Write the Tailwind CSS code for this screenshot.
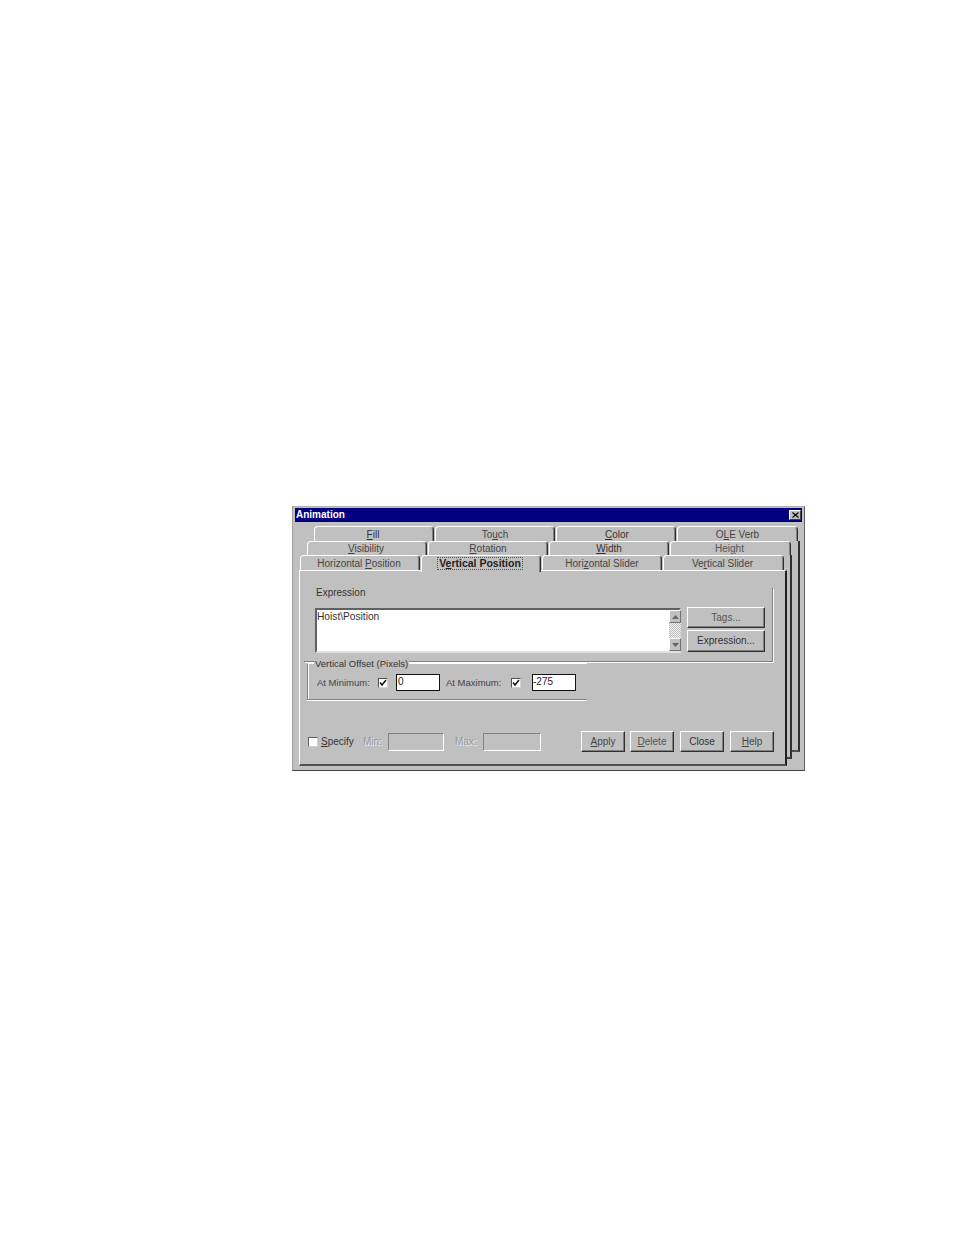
<!DOCTYPE html>
<html lang="en">
<head>
    <meta charset="UTF-8">
    <title>Animation</title>
    <script src="https://cdn.jsdelivr.net/npm/@tailwindcss/browser@4"></script>
</head>
<body class="bg-white min-h-screen font-['Liberation_Sans',Arial,sans-serif] text-[10px] leading-none text-[#2a2a2a]">
    <div class="pt-[506px] pl-[292px]">
        <!-- Dialog window -->
        <div class="relative w-[513px] h-[265px] bg-[#c0c0c0] border border-t-[#b0b0b0] border-l-[#a0a0a0] border-r-[#606060] border-b-[#404040] overflow-hidden">
            <!-- Pages behind the front one -->
            <div class="absolute left-[21px] top-[34px] w-[486px] h-[211px] border-r-2 border-b-2 border-r-[#303030] border-b-[#505050]"></div>
            <div class="absolute left-[13px] top-[48px] w-[486px] h-[204px] bg-[#c0c0c0] border-r-2 border-b-2 border-r-[#303030] border-b-[#404040]"></div>

            <!-- Title bar -->
            <div class="relative mx-[2px] mt-[1px] h-[14px] bg-[#000080] flex items-center justify-between pl-[1px] pr-[1px]">
                <span class="text-white text-[10px] font-bold">Animation</span>
                <span class="w-[12px] h-[10px] bg-[#c0c0c0] border border-t-white border-l-white border-r-[#404040] border-b-[#404040] flex items-center justify-center">
                    <svg width="7" height="6" viewBox="0 0 7 6"><path d="M0.5 0.5L6.5 5.5M6.5 0.5L0.5 5.5" stroke="#000" stroke-width="1.2"/></svg>
                </span>
            </div>

            <!-- Tab rows -->
            <div class="relative mt-[4px]">
                <div class="flex h-[15px] ml-[21px] gap-[1px]">
                    <div class="w-[120px] pt-[1px] pr-[2px] flex items-center justify-center border-t border-l border-t-white border-l-white border-r border-r-[#303030] shadow-[inset_-1px_0_0_#808080] rounded-t-[4px] text-[#333]"><span><u>F</u>ill</span></div>
                    <div class="w-[120px] pt-[1px] flex items-center justify-center border-t border-l border-t-white border-l-white border-r border-r-[#303030] shadow-[inset_-1px_0_0_#808080] rounded-t-[4px] text-[#444]"><span>To<u>u</u>ch</span></div>
                    <div class="w-[120px] pt-[1px] pl-[2px] flex items-center justify-center border-t border-l border-t-white border-l-white border-r border-r-[#303030] shadow-[inset_-1px_0_0_#808080] rounded-t-[4px] text-[#333]"><span><u>C</u>olor</span></div>
                    <div class="w-[121px] pt-[1px] flex items-center justify-center border-t border-l border-t-white border-l-white border-r border-r-[#303030] shadow-[inset_-1px_0_0_#808080] rounded-t-[4px] text-[#444]"><span>O<u>L</u>E Verb</span></div>
                </div>
                <div class="flex h-[14px] ml-[14px] gap-[1px]">
                    <div class="w-[120px] pt-[1px] pr-[2px] flex items-center justify-center border-t border-l border-t-white border-l-white border-r border-r-[#303030] shadow-[inset_-1px_0_0_#808080] rounded-t-[4px] text-[#444]"><span><u>V</u>isibility</span></div>
                    <div class="w-[120px] pt-[1px] flex items-center justify-center border-t border-l border-t-white border-l-white border-r border-r-[#303030] shadow-[inset_-1px_0_0_#808080] rounded-t-[4px] text-[#444]"><span><u>R</u>otation</span></div>
                    <div class="w-[120px] pt-[1px] flex items-center justify-center border-t border-l border-t-white border-l-white border-r border-r-[#303030] shadow-[inset_-1px_0_0_#808080] rounded-t-[4px] text-[#333]"><span><u>W</u>idth</span></div>
                    <div class="w-[121px] pt-[1px] pr-[2px] flex items-center justify-center border-t border-l border-t-white border-l-white border-r border-r-[#303030] shadow-[inset_-1px_0_0_#808080] rounded-t-[4px] text-[#555]"><span>Hei<u>g</u>ht</span></div>
                </div>
                <div class="relative flex h-[15px] ml-[7px] gap-[1px]">
                    <div class="w-[120px] pt-[1px] pr-[2px] flex items-center justify-center border-t border-l border-t-white border-l-white border-r border-r-[#303030] shadow-[inset_-1px_0_0_#808080] rounded-t-[4px] text-[#444]"><span>Horizontal <u>P</u>osition</span></div>
                    <div class="relative z-10 w-[120px] h-[17px] bg-[#c0c0c0] flex items-start pt-[1px] pr-[2px] justify-center border-t border-l border-t-white border-l-white border-r border-r-[#303030] shadow-[inset_-1px_0_0_#808080] rounded-t-[4px]"><span class="font-bold text-[10.5px] text-[#222] border border-dotted border-[#555] px-[1px]">V<u>e</u>rtical Position</span></div>
                    <div class="w-[120px] pt-[1px] flex items-center justify-center border-t border-l border-t-white border-l-white border-r border-r-[#303030] shadow-[inset_-1px_0_0_#808080] rounded-t-[4px] text-[#444]"><span>Hori<u>z</u>ontal Slider</span></div>
                    <div class="w-[121px] pt-[1px] pr-[2px] flex items-center justify-center border-t border-l border-t-white border-l-white border-r border-r-[#303030] shadow-[inset_-1px_0_0_#808080] rounded-t-[4px] text-[#444]"><span>Ve<u>r</u>tical Slider</span></div>
                </div>
            </div>

            <!-- Front page -->
            <div class="relative ml-[6px] w-[488px] h-[196px] bg-[#c0c0c0] border-t border-l border-t-white border-l-white border-r-2 border-b-2 border-r-[#202020] border-b-[#505050] pt-[21px]">
                <!-- Expression group -->
                <div class="ml-[4px] w-[469px] h-[74px] border-r border-b border-r-[#808080] border-b-[#808080] shadow-[1px_1px_0_#fff] pl-[11px]">
                    <div class="h-[16px] -mt-[4px] pl-[1px] text-[#333]">Expression</div>
                    <div class="flex mt-[4px]">
                        <div class="w-[366px] h-[45px] bg-white border-2 border-t-[#606060] border-l-[#606060] border-r-[#e0e0e0] border-b-[#e0e0e0] flex justify-between">
                            <span class="pt-[2px] text-[10.2px] text-[#333]">Hoist\Position</span>
                            <div class="w-[12px] -mr-[2px] flex flex-col bg-[repeating-conic-gradient(#c0c0c0_0_25%,#f0f0f0_0_50%)] bg-[length:2px_2px]">
                                <div class="h-[13px] bg-[#c0c0c0] border border-t-white border-l-white border-r-[#707070] border-b-[#707070] flex items-center justify-center">
                                    <svg width="7" height="4" viewBox="0 0 7 4"><path d="M3.5 0L7 4H0Z" fill="#666"/></svg>
                                </div>
                                <div class="flex-1"></div>
                                <div class="h-[13px] bg-[#c0c0c0] border border-t-white border-l-white border-r-[#707070] border-b-[#707070] flex items-center justify-center">
                                    <svg width="7" height="4" viewBox="0 0 7 4"><path d="M3.5 4L7 0H0Z" fill="#666"/></svg>
                                </div>
                            </div>
                        </div>
                        <div class="ml-[6px] -mt-[1px] flex flex-col gap-[2px]">
                            <div class="w-[78px] h-[21px] flex items-center justify-center border border-t-white border-l-white border-r-[#303030] border-b-[#303030] shadow-[inset_-1px_-1px_0_#808080] text-[#555]">Tags...</div>
                            <div class="w-[78px] h-[22px] flex items-center justify-center border border-t-white border-l-white border-r-[#303030] border-b-[#303030] shadow-[inset_-1px_-1px_0_#808080] text-[#333]">Expression...</div>
                        </div>
                    </div>
                </div>

                <!-- Vertical Offset group -->
                <div class="relative ml-[7px] mt-[1px] w-[280px] h-[37px] text-[9.5px] border-t border-l border-b border-t-white border-l-[#808080] border-b-[#808080] shadow-[inset_1px_0_0_#fff,0_1px_0_#fff] flex items-center pt-[2px] pl-[9px]">
                    <span class="absolute left-[6px] -top-[5px] bg-[#c0c0c0] px-[1px] text-[#333]">Vertical Offset (Pixels)</span>
                    <span class="w-[61px] text-[#444]">At Minimum:</span>
                    <span class="w-[10px] h-[10px] bg-white border border-t-[#505050] border-l-[#505050] border-r-[#d0d0d0] border-b-[#d0d0d0] flex items-center justify-center">
                        <svg width="8" height="8" viewBox="0 0 8 8"><path d="M1 3.5L3 6L7 1" fill="none" stroke="#111" stroke-width="1.5"/></svg>
                    </span>
                    <span class="ml-[8px] w-[44px] h-[17px] bg-white border border-[#111] pl-[1px] pt-[2px] text-[10px] text-[#222]">0</span>
                    <span class="ml-[6px] w-[65px] text-[#444]">At Maximum:</span>
                    <span class="w-[10px] h-[10px] bg-white border border-t-[#505050] border-l-[#505050] border-r-[#d0d0d0] border-b-[#d0d0d0] flex items-center justify-center">
                        <svg width="8" height="8" viewBox="0 0 8 8"><path d="M1 3.5L3 6L7 1" fill="none" stroke="#111" stroke-width="1.5"/></svg>
                    </span>
                    <span class="ml-[11px] w-[44px] h-[17px] bg-white border border-[#111] pt-[2px] text-[10px] text-[#222]">-275</span>
                </div>

                <!-- Bottom row -->
                <div class="flex items-center ml-[8px] mt-[31px] h-[21px]">
                    <span class="w-[10px] h-[10px] bg-white border border-t-[#606060] border-l-[#606060] border-r-[#d0d0d0] border-b-[#d0d0d0]"></span>
                    <span class="ml-[3px] w-[42px] text-[#333]"><u>S</u>pecify</span>
                    <span class="w-[25px] text-[#999] [text-shadow:1px_1px_0_#eee]">Min:</span>
                    <span class="w-[56px] h-[18px] border border-t-[#808080] border-l-[#808080] border-r-white border-b-white"></span>
                    <span class="ml-[11px] w-[28px] text-[#999] [text-shadow:1px_1px_0_#eee]">Max:</span>
                    <span class="w-[58px] h-[18px] border border-t-[#808080] border-l-[#808080] border-r-white border-b-white"></span>
                    <div class="ml-[40px] flex">
                        <div class="w-[44px] h-[21px] flex items-center justify-center border border-t-white border-l-white border-r-[#303030] border-b-[#303030] shadow-[inset_-1px_-1px_0_#808080] text-[#444]"><span><u>A</u>pply</span></div>
                        <div class="ml-[5px] w-[44px] h-[21px] flex items-center justify-center border border-t-white border-l-white border-r-[#303030] border-b-[#303030] shadow-[inset_-1px_-1px_0_#808080] text-[#555]"><span><u>D</u>elete</span></div>
                        <div class="ml-[6px] w-[44px] h-[21px] flex items-center justify-center border border-t-white border-l-white border-r-[#303030] border-b-[#303030] shadow-[inset_-1px_-1px_0_#808080] text-[#333]"><span>Close</span></div>
                        <div class="ml-[6px] w-[44px] h-[21px] flex items-center justify-center border border-t-white border-l-white border-r-[#303030] border-b-[#303030] shadow-[inset_-1px_-1px_0_#808080] text-[#444]"><span><u>H</u>elp</span></div>
                    </div>
                </div>
            </div>
        </div>
    </div>
</body>
</html>
